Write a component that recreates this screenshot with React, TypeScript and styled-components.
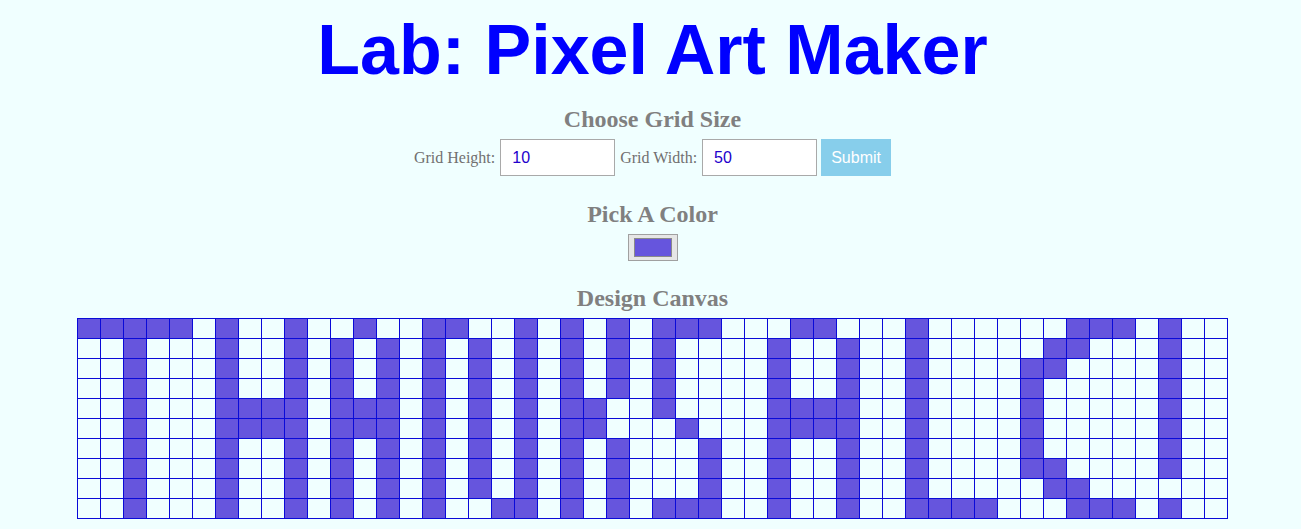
import React from "react";
import styled, { createGlobalStyle } from "styled-components";

const GlobalStyle = createGlobalStyle`
  html, body {
    margin: 0;
    padding: 0;
    background: #f0ffff;
  }
  body {
    font-family: "Liberation Serif", "Times New Roman", serif;
  }
`;

const Page = styled.div`
  display: flex;
  flex-direction: column;
  align-items: center;
  padding: 0 8px 8px 12px;
`;

const Title = styled.h1`
  margin: 10px 0 0;
  font-family: "Liberation Sans", Arial, sans-serif;
  font-weight: 700;
  font-size: 70px;
  line-height: normal;
  color: #0000ff;
`;

const Heading = styled.h2<{ $top: number }>`
  margin: ${(p) => p.$top}px 0 0;
  font-family: "Liberation Serif", "Times New Roman", serif;
  font-weight: 700;
  font-size: 24px;
  line-height: normal;
  color: #808080;
`;

const SizeForm = styled.form`
  display: flex;
  align-items: center;
  gap: 5px;
  margin-top: 6px;
`;

const Label = styled.label`
  font-family: "Liberation Serif", "Times New Roman", serif;
  font-size: 16px;
  color: #707070;
`;

const NumberInput = styled.input`
  box-sizing: border-box;
  width: 115px;
  height: 37px;
  padding: 0 11px;
  border: 1px solid #a9a9a9;
  background: #ffffff;
  font-family: "Liberation Sans", Arial, sans-serif;
  font-size: 16px;
  color: #2200cc;
  outline: none;
`;

const SubmitButton = styled.button`
  box-sizing: border-box;
  width: 70px;
  height: 37px;
  margin-left: -1px;
  border: none;
  background: #87ceeb;
  color: #ffffff;
  font-family: "Liberation Sans", Arial, sans-serif;
  font-size: 16px;
  padding: 0;
`;

const ColorPicker = styled.input`
  box-sizing: border-box;
  width: 50px;
  height: 27px;
  margin: 6px 0 0;
  padding: 3px 5px;
  border: 1px solid #a0a0a0;
  background: #e6e6e6;
  &::-webkit-color-swatch-wrapper {
    padding: 0;
  }
  &::-webkit-color-swatch {
    border: 1px solid #8a8a8a;
  }
`;

const Canvas = styled.table`
  margin-top: 6px;
  border-collapse: collapse;
  border-spacing: 0;
`;

const Cell = styled.td<{ $on: boolean }>`
  width: 22px;
  height: 19px;
  padding: 0;
  box-sizing: content-box;
  border: 1px solid #0a0ad8;
  background: ${(p) => (p.$on ? "#6655dd" : "#f0ffff")};
`;

const COLS = 50;

const filled: number[][] = [
  [0, 1, 2, 3, 4, 6, 9, 12, 15, 16, 19, 21, 23, 25, 26, 27, 31, 32, 36, 43, 44, 45, 47],
  [2, 6, 9, 11, 13, 15, 17, 19, 21, 23, 25, 30, 33, 36, 42, 43, 47],
  [2, 6, 9, 11, 13, 15, 17, 19, 21, 23, 25, 30, 33, 36, 41, 42, 47],
  [2, 6, 9, 11, 13, 15, 17, 19, 21, 23, 25, 30, 33, 36, 41, 47],
  [2, 6, 7, 8, 9, 11, 12, 13, 15, 17, 19, 21, 22, 25, 30, 31, 32, 33, 36, 41, 47],
  [2, 6, 7, 8, 9, 11, 12, 13, 15, 17, 19, 21, 22, 26, 30, 31, 32, 33, 36, 41, 47],
  [2, 6, 9, 11, 13, 15, 17, 19, 21, 23, 27, 30, 33, 36, 41, 47],
  [2, 6, 9, 11, 13, 15, 17, 19, 21, 23, 27, 30, 33, 36, 41, 42, 47],
  [2, 6, 9, 11, 13, 15, 17, 19, 21, 23, 27, 30, 33, 36, 42, 43],
  [2, 6, 9, 11, 13, 15, 18, 19, 21, 23, 25, 26, 27, 30, 33, 36, 37, 38, 39, 43, 44, 45, 47],
];

export default function App() {
  return (
    <>
      <GlobalStyle />
      <Page>
        <Title>Lab: Pixel Art Maker</Title>
        <Heading $top={16}>Choose Grid Size</Heading>
        <SizeForm onSubmit={(e) => e.preventDefault()}>
          <Label htmlFor="inputHeight">Grid Height:</Label>
          <NumberInput id="inputHeight" type="text" defaultValue="10" />
          <Label htmlFor="inputWidth">Grid Width:</Label>
          <NumberInput id="inputWidth" type="text" defaultValue="50" />
          <SubmitButton type="submit">Submit</SubmitButton>
        </SizeForm>
        <Heading $top={25}>Pick A Color</Heading>
        <ColorPicker type="color" defaultValue="#6655dd" />
        <Heading $top={24}>Design Canvas</Heading>
        <Canvas>
          <tbody>
            {filled.map((row, r) => {
              const set = new Set(row);
              return (
                <tr key={r}>
                  {Array.from({ length: COLS }, (_, c) => (
                    <Cell key={c} $on={set.has(c)} />
                  ))}
                </tr>
              );
            })}
          </tbody>
        </Canvas>
      </Page>
    </>
  );
}
